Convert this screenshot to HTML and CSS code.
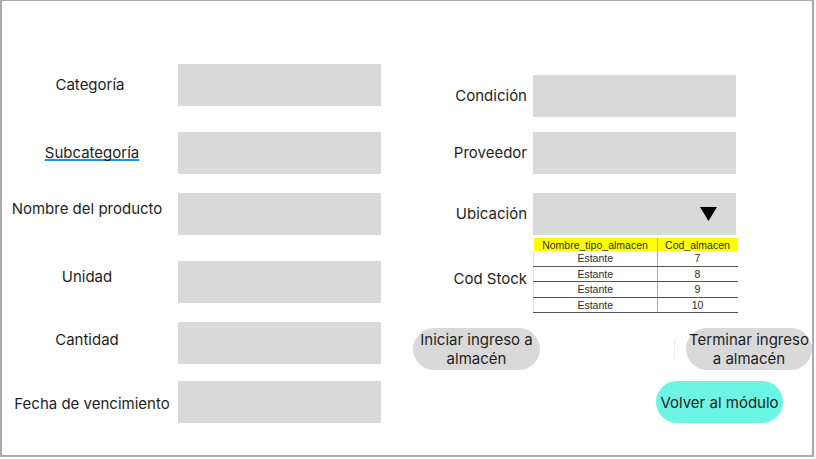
FILE: index.html
```html
<!DOCTYPE html>
<html lang="es">
<head>
<meta charset="utf-8">
<title>Ingreso a almacén</title>
<link rel="stylesheet" href="styles.css">
</head>
<body>
<div class="frame">
  <div class="col-left">
    <div class="row">
      <div class="label">Categoría</div>
      <div class="field"></div>
    </div>
    <div class="row gap-26">
      <div class="label"><span class="spell">Subcategoría</span></div>
      <div class="field"></div>
    </div>
    <div class="row gap-19">
      <div class="label up-5 shift-l">Nombre del producto</div>
      <div class="field"></div>
    </div>
    <div class="row gap-26">
      <div class="label up-5 shift-l">Unidad</div>
      <div class="field"></div>
    </div>
    <div class="row gap-19">
      <div class="label up-3 shift-l">Cantidad</div>
      <div class="field"></div>
    </div>
    <div class="row gap-17">
      <div class="label down-2">Fecha de vencimiento</div>
      <div class="field"></div>
    </div>
  </div>

  <div class="col-right">
    <div class="row">
      <div class="rlabel">Condición</div>
      <div class="field"></div>
    </div>
    <div class="row gap-15">
      <div class="rlabel">Proveedor</div>
      <div class="field"></div>
    </div>
    <div class="row gap-19">
      <div class="rlabel">Ubicación</div>
      <div class="field select">
        <svg class="caret" width="17" height="14" viewBox="0 0 17 14"><polygon points="0,0 17,0 8.5,14" fill="#000"/></svg>
      </div>
    </div>
    <div class="row table-row">
      <div class="rlabel down-7">Cod Stock</div>
      <table class="stock">
        <thead>
          <tr><th class="c1">Nombre_tipo_almacen</th><th class="c2">Cod_almacen</th></tr>
        </thead>
        <tbody>
          <tr><td class="c1">Estante</td><td class="c2">7</td></tr>
          <tr><td class="c1">Estante</td><td class="c2">8</td></tr>
          <tr><td class="c1">Estante</td><td class="c2">9</td></tr>
          <tr><td class="c1">Estante</td><td class="c2">10</td></tr>
        </tbody>
      </table>
    </div>
    <div class="buttons">
      <div class="pill">Iniciar ingreso a<br>almacén</div>
      <div class="sliver"></div>
      <div class="pill end">Terminar ingreso<br>a almacén</div>
    </div>
    <div class="back-row">
      <div class="pill teal">Volver al módulo</div>
    </div>
  </div>
</div>
</body>
</html>
```

FILE: styles.css
```css
html, body {
  margin: 0;
  padding: 0;
  background: #ffffff;
  overflow: hidden;
}

body {
  font-family: Inter, "Noto Sans", "Liberation Sans", sans-serif;
  font-size: 15px;
  color: #1e1e1e;
}

.frame {
  box-sizing: border-box;
  width: 814px;
  height: 457px;
  border: 2px solid #ababab;
  border-top-width: 1px;
  display: flex;
  align-items: flex-start;
}

.col-left {
  display: flex;
  flex-direction: column;
  padding-top: 63px;
  width: 379px;
}

.col-right {
  display: flex;
  flex-direction: column;
  padding-top: 74px;
  margin-left: 19px;
  width: 412px;
}

.row {
  display: flex;
  align-items: center;
}

.gap-15 { margin-top: 15px; }
.gap-17 { margin-top: 17px; }
.gap-19 { margin-top: 19px; }
.gap-26 { margin-top: 26px; }

.label {
  width: 176px;
  text-align: center;
  line-height: 18px;
  white-space: nowrap;
}

.shift-l { padding-right: 6px; box-sizing: border-box; }

.up-3 { margin-bottom: 6px; }
.up-5 { margin-bottom: 10px; }
.down-2 { margin-top: 4px; padding-left: 4px; box-sizing: border-box; }
.down-7 { margin-top: 7px; }

.spell {
  text-decoration: underline;
  text-decoration-color: #1e90f0;
  text-decoration-thickness: 2px;
  text-underline-offset: 1px;
  text-decoration-skip-ink: none;
  margin-left: 4px;
}

.field {
  width: 203px;
  height: 42px;
  background: #d9d9d9;
  flex: none;
}

.rlabel {
  width: 127px;
  margin-right: 6px;
  text-align: right;
  line-height: 18px;
  white-space: nowrap;
}

.select {
  display: flex;
  align-items: center;
  justify-content: flex-end;
  padding-right: 19px;
  box-sizing: border-box;
}

.caret { display: block; }

.table-row {
  margin-top: 3px;
}

.stock {
  border-collapse: collapse;
  width: 203px;
  font-family: "Liberation Sans", Arial, sans-serif;
  font-size: 10.5px;
  color: #2a2a2a;
  table-layout: fixed;
}

.stock th {
  background: #ffff00;
  font-weight: normal;
  height: 13px;
  line-height: 12px;
  padding: 0;
  text-align: center;
}

.stock td {
  height: 14.5px;
  line-height: 12px;
  padding: 0;
  text-align: center;
  border-bottom: 1px solid #555;
}

.stock .c1 { width: 123px; }
.stock .c2 { width: 80px; border-left: 1px solid #a8a8a8; }
.stock td.c1 { border-left: 1px solid #e2e2e2; }

.buttons {
  display: flex;
  align-items: center;
  margin-top: 15px;
  padding-left: 13px;
}

.pill {
  width: 127px;
  height: 42px;
  border-radius: 21px;
  background: #d9d9d9;
  display: flex;
  align-items: center;
  justify-content: center;
  text-align: center;
  line-height: 19px;
  white-space: nowrap;
  flex: none;
}

.pill.end {
  width: 126px;
}

.sliver {
  margin-left: auto;
  margin-right: 8px;
  width: 4px;
  height: 24px;
  border-radius: 4px 0 0 4px;
  border-left: 1px solid #ececec;
  box-sizing: border-box;
}

.back-row {
  display: flex;
  justify-content: flex-end;
  margin-top: 11px;
  padding-right: 29px;
}

.pill.teal {
  background: #6cf4e4;
}
```
